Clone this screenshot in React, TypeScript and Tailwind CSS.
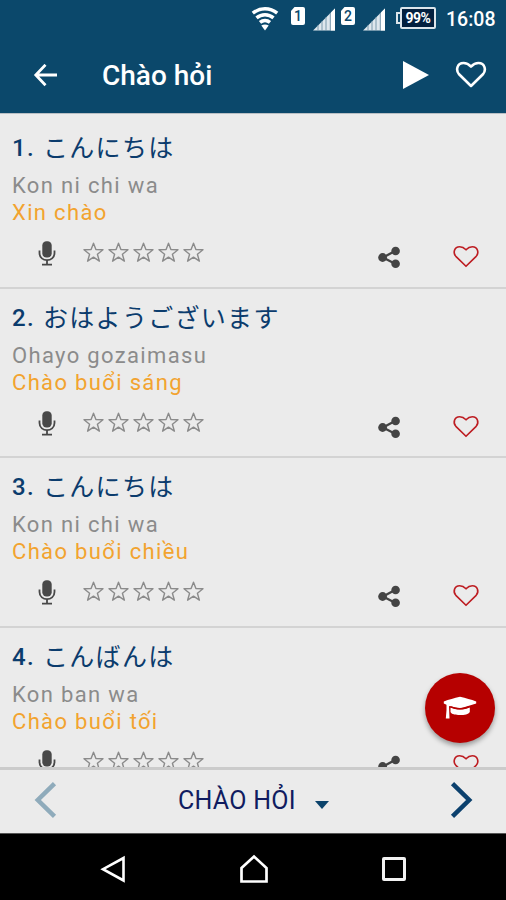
import React from "react";

type Phrase = { title: string; kana: string; romaji: string; meaning: string; height: string };

const phrases: Phrase[] = [
  { title: "1.", kana: "こんにちは", romaji: "Kon ni chi wa", meaning: "Xin chào", height: "h-[170px]" },
  { title: "2.", kana: "おはようございます", romaji: "Ohayo gozaimasu", meaning: "Chào buổi sáng", height: "h-[169px]" },
  { title: "3.", kana: "こんにちは", romaji: "Kon ni chi wa", meaning: "Chào buổi chiều", height: "h-[170px]" },
  { title: "4.", kana: "こんばんは", romaji: "Kon ban wa", meaning: "Chào buổi tối", height: "h-[170px]" },
];

function Wifi() {
  return (
    <svg className="ml-[251px] mt-[7px] h-6 w-7 shrink-0" viewBox="0 0 28 24" fill="none" stroke="#fff" strokeWidth="3.5">
      <path d="M1.8 6.2C9 .3 19 .3 26.2 6.2" />
      <path d="M5.5 10.8C10.5 6.6 17.5 6.6 22.5 10.8" />
      <path d="M9 15.4C12 12.9 16 12.9 19 15.4" />
      <path d="M10.3 18.6C12.5 17 15.5 17 17.7 18.6L14 23.4Z" fill="#fff" stroke="none" />
    </svg>
  );
}

function Sim({ n }: { n: string }) {
  return (
    <div className="mt-[7px] flex h-[18px] w-[14px] shrink-0 items-center justify-center rounded-[2px] bg-white text-[14px] font-medium leading-none text-[#0b486b] [clip-path:polygon(25%_0,100%_0,100%_100%,0_100%,0_22%)]">
      {n}
    </div>
  );
}

function Signal() {
  return (
    <svg className="mt-[8px] h-[23px] w-[22px] shrink-0" viewBox="0 0 22 23">
      <path d="M0 22.5L22 .5V22.5Z" fill="#dfe7ed" />
      <path d="M18 4.5L22 .5V22.5H18Z" fill="#fff" />
      <path d="M5 17V23M9 13V23M13 9V23M17.3 5V23" stroke="#6f91a6" strokeWidth=".9" />
    </svg>
  );
}

function Battery() {
  return (
    <div className="mt-[7px] flex h-[22px] w-[40px] shrink-0 items-center">
      <div className="h-[12px] w-[4px] shrink-0 border-2 border-r-0 border-[#dce5eb]" />
      <div className="flex h-[22px] w-[36px] shrink-0 items-center justify-center rounded-[2px] border-2 border-[#dce5eb] bg-[#03203f] text-[14px] font-bold leading-none tracking-[-0.5px] text-white">
        99%
      </div>
    </div>
  );
}

function Mic() {
  return (
    <svg className="ml-[38px] mt-[15px] h-[26px] w-[18px] shrink-0" viewBox="0 0 18 26" fill="none" stroke="#484848">
      <rect x="4.3" y="0.3" width="9.4" height="16.2" rx="4.2" fill="#484848" stroke="none" />
      <path d="M1.5 9.5V12C1.5 21.5 16.5 21.5 16.5 12V9.5" strokeWidth="1.8" />
      <path d="M9 19V23M4 23.7H14" strokeWidth="1.8" />
    </svg>
  );
}

function Star() {
  return (
    <svg className="h-[21px] w-[21px]" viewBox="0 0 21 21" fill="none" stroke="#8b8b8b" strokeWidth="1.4" strokeLinejoin="round">
      <path d="M10.5 1.2L12.9 7.6L20 7.8L14.4 12.2L16.4 19.2L10.5 15.2L4.6 19.2L6.6 12.2L1 7.8L8.1 7.6Z" />
    </svg>
  );
}

function Share() {
  return (
    <svg className="ml-[174px] mt-[20px] h-[23px] w-[23px] shrink-0" viewBox="0 0 23 23" fill="#444">
      <path d="M17.5 4.8L5 11.5L17.5 18" fill="none" stroke="#444" strokeWidth="2.3" />
      <circle cx="17.6" cy="5" r="4.3" />
      <circle cx="4.6" cy="11.5" r="4.4" />
      <circle cx="17.6" cy="17.7" r="4.3" />
    </svg>
  );
}

function Heart({ className, width }: { className: string; width: number }) {
  return (
    <svg className={className} viewBox="0 0 28 24" fill="none" stroke="currentColor" strokeWidth={width} strokeLinejoin="round">
      <path d="M14 22.2L3.4 11.8C.2 8.3 1.6 1.8 7.4 1.8C10.8 1.8 12.4 3.3 14 5C15.6 3.3 17.2 1.8 20.6 1.8C26.4 1.8 27.8 8.3 24.6 11.8Z" />
    </svg>
  );
}

function Row({ p }: { p: Phrase }) {
  return (
    <li className={`flex shrink-0 flex-col border-b-2 border-[#d3d3d3] pt-3 ${p.height}`}>
      <h2 className="ml-3 flex h-[34px] items-center whitespace-nowrap text-[#0b3c6d]">
        <span className="w-[31px] shrink-0 text-[24px] font-medium tracking-[1.3px]">{p.title}</span>
        <span className="-mt-[4px] font-['Noto_Sans_CJK_JP',sans-serif] text-[25px] font-normal leading-[34px] tracking-[1.3px]">{p.kana}</span>
      </h2>
      <p className="ml-3 mt-[7px] h-[27px] whitespace-nowrap text-[22px] leading-[27px] tracking-[1.34px] text-[#8b8b8b]">{p.romaji}</p>
      <p className="ml-3 h-[27px] whitespace-nowrap text-[22px] leading-[27px] tracking-[1.34px] text-[#f2a32f]">{p.meaning}</p>
      <div className="flex items-start">
        <Mic />
        <div className="ml-[27px] mt-[16px] flex shrink-0 gap-1">
          {[0, 1, 2, 3, 4].map((i) => <Star key={i} />)}
        </div>
        <Share />
        <Heart width={1.7} className="ml-[51px] mt-[19px] h-[23px] w-[28px] shrink-0 text-[#bd1d22]" />
      </div>
    </li>
  );
}

export default function App() {
  return (
    <div className="relative flex h-[900px] w-[506px] flex-col overflow-hidden bg-[#ebebeb] font-[Roboto,'Noto_Sans_CJK_JP',sans-serif]">
      <div className="flex h-[38px] shrink-0 items-start bg-[#0b486b]">
        <Wifi />
        <div className="ml-[12px] flex gap-[8px]"><Sim n="1" /><Signal /></div>
        <div className="ml-[6px] flex gap-[8px]"><Sim n="2" /><Signal /></div>
        <div className="ml-[11px]"><Battery /></div>
        <span className="ml-[10px] mt-[8px] text-[19.5px] font-medium leading-6 text-white">16:08</span>
      </div>
      <header className="flex h-[75px] shrink-0 items-center bg-[#0b486b] text-white">
        <svg className="ml-[33px] h-6 w-6 shrink-0" viewBox="0 0 24 24" fill="none" stroke="white" strokeWidth="2.8">
          <path d="M24 11H3M12.5 .8L2.8 11L12.5 21.2" />
        </svg>
        <h1 className="ml-[45px] w-[255px] text-[28px] font-medium leading-8">Chào hỏi</h1>
        <svg className="ml-[46px] mb-[2px] h-7 w-[26px] shrink-0" viewBox="0 0 26 28"><path d="M0 0L26 14L0 28Z" fill="#fff" /></svg>
        <Heart width={2.3} className="mb-[2px] ml-[26px] h-[27px] w-[32px] shrink-0 text-white" />
      </header>
      <ul className="flex h-[654px] shrink-0 flex-col overflow-hidden border-t border-[#b9bfc4] pt-[5px]">
        {phrases.map((p) => <Row key={p.title} p={p} />)}
      </ul>
      <nav className="flex h-[66px] shrink-0 items-center border-t-[3px] border-[#cbcbcb] pb-[4px] text-[#07386a]">
        <svg className="ml-[34px] h-9 w-[23px] shrink-0" viewBox="0 0 23 36" fill="none" stroke="#8fabbb" strokeWidth="4.5"><path d="M20.5 1.7L3.8 18L20.5 34.3" /></svg>
        <span className="ml-[121px] mt-[2px] w-[119px] whitespace-nowrap text-[25px] leading-8 tracking-[0.25px] text-[#101c60]">CHÀO HỎI</span>
        <svg className="ml-[17px] mt-[11px] h-2 w-4 shrink-0" viewBox="0 0 16 8"><path d="M1 0H15L8 8Z" fill="#0b436b" /></svg>
        <svg className="ml-[120px] h-9 w-[23px] shrink-0" viewBox="0 0 23 36" fill="none" stroke="#0b406d" strokeWidth="4.5"><path d="M2.5 1.7L19.2 18L2.5 34.3" /></svg>
      </nav>
      <footer className="flex h-[67px] shrink-0 items-start border-t border-[#555] bg-black">
        <svg className="ml-[100px] mt-[21px] h-7 w-[26px]" viewBox="0 0 26 28" fill="none" stroke="#fff" strokeWidth="2.6"><path d="M23.5 3V25.5L3 14.2Z" /></svg>
        <svg className="ml-[113px] mt-[20px] h-[30px] w-[30px]" viewBox="0 0 30 30" fill="none" stroke="#fff" strokeWidth="2.7"><path d="M2.5 14L15 2.5L27.5 14V27.5H2.5Z" /></svg>
        <div className="ml-[113px] mt-[23px] h-6 w-6 rounded-[2px] border-[3px] border-[#f2f2f2]" />
      </footer>
      <button className="absolute left-[425px] top-[673px] flex h-[70px] w-[70px] items-center justify-center rounded-full bg-[#b60000] shadow-[0_3px_5px_rgba(0,0,0,0.35)]">
        <svg className="h-6 w-[34px]" viewBox="0 0 34 24" fill="#fff">
          <path d="M17 .8C11 2.2 6 3.6 .8 5.5V7.5L3.5 8.7V14L2.8 22.5H6.5L6 10L17 12.5L33.2 7.5V5.5C28 3.6 23 2.2 17 .8Z" />
          <path d="M7.5 11.2C13.5 14.3 20.5 14.3 26.8 11.2V16C25.5 18.6 21.5 19 17 19C12.5 19 8.5 18.3 7.5 16Z" />
          <path d="M7.2 10.7C13.3 13.2 20.7 13.2 26.5 10.7" fill="none" stroke="#b60000" strokeWidth="1.5" />
        </svg>
      </button>
    </div>
  );
}
